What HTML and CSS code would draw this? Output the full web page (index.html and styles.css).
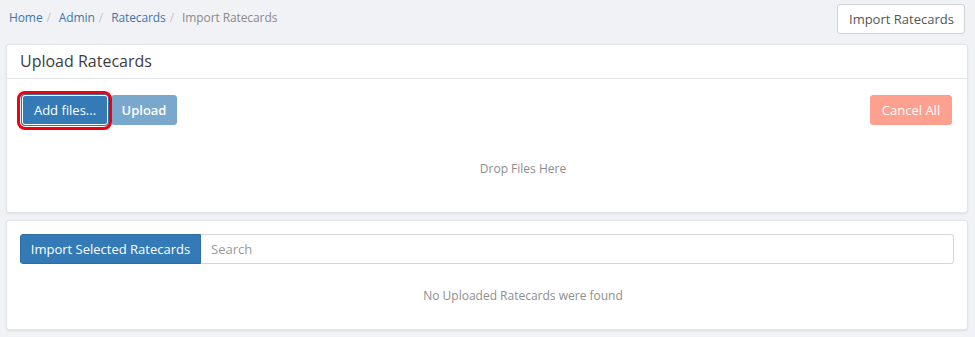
FILE: index.html
```html
<!DOCTYPE html>
<html>
<head>
<meta charset="utf-8">
<link rel="stylesheet" href="styles.css">
</head>
<body>
<div class="topbar">
  <nav class="crumbs">
    <a class="crumb">Home</a><span class="sep">/</span>
    <a class="crumb">Admin</a><span class="sep">/</span>
    <a class="crumb">Ratecards</a><span class="sep">/</span>
    <span class="crumb-active">Import Ratecards</span>
  </nav>
  <button class="btn btn-default">Import Ratecards</button>
</div>

<section class="panel panel-upload">
  <div class="panel-heading">Upload Ratecards</div>
  <div class="panel-body">
    <div class="actions">
      <div class="left-actions">
        <span class="highlight"><button class="btn btn-primary">Add files...</button></span>
        <button class="btn btn-primary disabled">Upload</button>
      </div>
      <button class="btn btn-danger">Cancel All</button>
    </div>
    <div class="dropzone">Drop Files Here</div>
  </div>
</section>

<section class="panel panel-list">
  <div class="panel-body">
    <div class="input-group">
      <button class="btn btn-primary btn-group-left">Import Selected Ratecards</button>
      <input class="search" type="text" placeholder="Search">
    </div>
    <div class="empty">No Uploaded Ratecards were found</div>
  </div>
</section>
</body>
</html>
```
FILE: styles.css
```css
* { box-sizing: border-box; }
html, body { margin: 0; padding: 0; }
body {
  background: #f1f2f6;
  font-family: "Open Sans", "Liberation Sans", sans-serif;
  font-size: 13px;
  color: #333;
  width: 975px;
  height: 337px;
  overflow: hidden;
}
.topbar {
  display: flex;
  justify-content: space-between;
  align-items: flex-start;
  padding: 4px 9px 0 9px;
  height: 44px;
}
.crumbs {
  padding-top: 6px;
  font-size: 12px;
  line-height: 16px;
  letter-spacing: -0.1px;
}
.crumb { color: #3a77ad; text-decoration: none; }
.sep { color: #c4c4c4; padding: 0 5px 0 4px; }
.crumb-active { color: #8a8a8a; }

.btn {
  font-family: inherit;
  font-size: 13px;
  height: 30px;
  padding: 0 11px;
  border-radius: 3px;
  border: 1px solid transparent;
  line-height: 28px;
  cursor: pointer;
  white-space: nowrap;
}
.btn-default {
  background: #fff;
  border-color: #cfd2d6;
  color: #555;
  width: 128px;
  margin-right: 1px;
}
.btn-primary {
  background: #337ab7;
  color: #fff;
  border-color: #2e6da4;
}
.btn-primary.disabled {
  background: #7aa8cd;
  border-color: #7aa8cd;
  font-weight: 600;
}
.btn-danger {
  background: #fda08f;
  border-color: #fda08f;
  color: #fff;
}

.panel {
  background: #fff;
  margin: 0 7px 0 6px;
  border: 1px solid #e1e4ea;
  border-radius: 3px;
  box-shadow: 0 1px 2px rgba(0,0,0,0.08);
}
.panel-upload { height: 169px; }
.panel-heading {
  height: 34px;
  border-bottom: 1px solid #e3e6eb;
  padding: 6px 13px;
  font-size: 16px;
  line-height: 21px;
  color: #3d3d3d;
}
.panel-upload .panel-body { padding: 16px 15px 0 15px; }
.actions {
  display: flex;
  justify-content: space-between;
  align-items: center;
}
.left-actions { display: flex; align-items: center; }
.highlight {
  position: relative;
  display: inline-flex;
}
.highlight::after {
  content: "";
  position: absolute;
  left: -5px; right: -4px; top: -4px; bottom: -5px;
  border: 3.5px solid #f00010;
  border-radius: 8px;
  pointer-events: none;
}
.highlight .btn { width: 86px; padding: 0; border-color: #fff; box-shadow: 0 0 0 1px #3b6fa0; }
.left-actions .disabled { width: 66px; margin-left: 3px; padding: 0; }
.btn-danger { width: 82px; padding: 0; margin-right: 0; }
.dropzone {
  text-align: center;
  padding-left: 72px;
  margin-top: 36px;
  font-size: 12px;
  color: #8e8e8e;
  line-height: 16px;
}

.panel-list { margin-top: 7px; height: 110px; }
.panel-list .panel-body { padding: 13px 13px 0 13px; }
.input-group { display: flex; height: 30px; }
.btn-group-left {
  height: 30px;
  width: 181px;
  padding: 0;
  border-radius: 3px 0 0 3px;
}
.search {
  flex: 1;
  height: 30px;
  border: 1px solid #d3d6da;
  border-left: none;
  border-radius: 0 3px 3px 0;
  padding: 0 10px;
  font-family: inherit;
  font-size: 13px;
  color: #555;
  outline: none;
}
.search::placeholder { color: #9a9a9a; }
.empty {
  text-align: center;
  padding-left: 72px;
  margin-top: 24px;
  font-size: 12px;
  color: #8e8e8e;
  line-height: 16px;
}
```
